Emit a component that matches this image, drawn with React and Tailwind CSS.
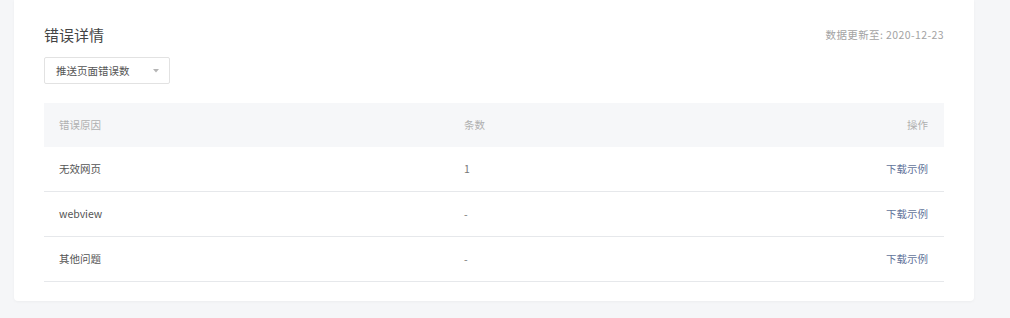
const rows = [
  { reason: "无效网页", count: "1" },
  { reason: "webview", count: "-" },
  { reason: "其他问题", count: "-" },
];

export default function App() {
  return (
    <div
      className="min-h-[318px] w-[1010px] bg-[#f5f6f8] pl-[14px]"
      style={{ fontFamily: '"Noto Sans CJK SC", "Noto Sans", sans-serif' }}
    >
      <div className="w-[960px] rounded-b-[4px] bg-white px-[30px] pt-[23px] pb-[19px] shadow-[0_1px_3px_rgba(0,0,0,0.04)]">
        <div className="flex items-center justify-between">
          <h2 className="text-[15px] leading-[24px] font-normal text-[#444]">错误详情</h2>
          <span className="text-[10.5px] leading-[24px] tracking-[0.4px] text-[#a3a3a3]">数据更新至: 2020-12-23</span>
        </div>

        <div className="mt-[10px] flex h-[27px] w-[126px] items-center justify-between rounded-[2px] border border-[#e2e2e2] pl-[11px] pr-[10px]">
          <span className="text-[10.5px] text-[#555]">推送页面错误数</span>
          <svg width="6" height="4" viewBox="0 0 6 4">
            <path d="M0 0h6L3 3.5z" fill="#b5b5b5" />
          </svg>
        </div>

        <div className="mt-[19px] w-[900px]">
          <div className="flex h-[44px] items-center bg-[#f6f7f9] text-[10.5px] text-[#b0b0b0]">
            <div className="w-[405px] pl-[15px]">错误原因</div>
            <div className="flex-1 pl-[15px]">条数</div>
            <div className="w-[200px] pr-[16px] text-right">操作</div>
          </div>
          {rows.map((r) => (
            <div
              key={r.reason}
              className="flex h-[45px] items-center border-b border-[#e6e8eb] text-[10.5px] text-[#555]"
            >
              <div className="w-[405px] pl-[15px]">{r.reason}</div>
              <div className="flex-1 pl-[15px] text-[#777]">{r.count}</div>
              <div className="w-[200px] pr-[16px] text-right text-[#62739a]">下载示例</div>
            </div>
          ))}
        </div>
      </div>
    </div>
  );
}
